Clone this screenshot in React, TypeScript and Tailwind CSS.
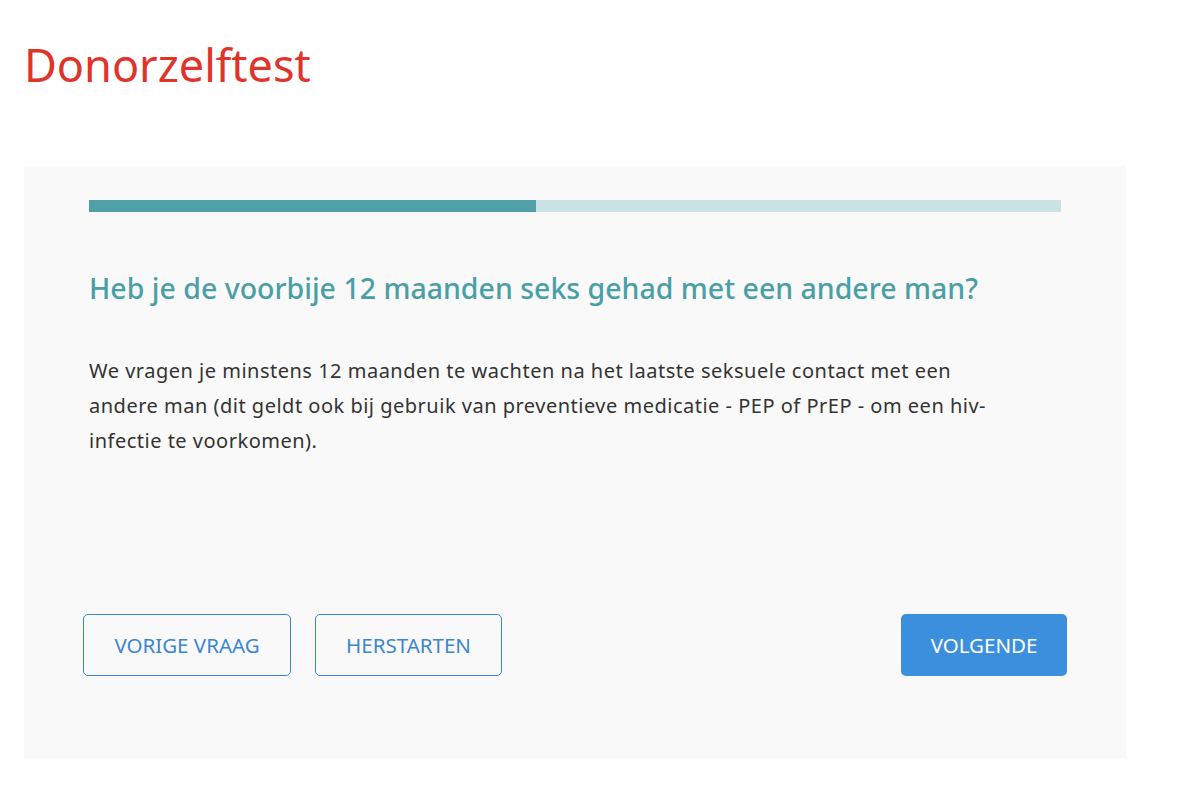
export default function App() {
  const progress = 46;

  return (
    <div className="min-h-screen bg-white" style={{ fontFamily: '"Noto Sans", "Open Sans", sans-serif' }}>
      <header className="px-6 pt-[37px] pb-[73px]">
        <h1 className="text-[45px] leading-[56px] text-[#e0332a] font-normal">Donorzelftest</h1>
      </header>

      <main className="ml-6 w-[1102px] bg-[#f9f9f9] px-[65px] pt-[34px] pb-[82px]">
        <div className="h-3 w-full bg-[#c9e3e5]">
          <div className="h-3 bg-[#4fa0a8]" style={{ width: `${progress}%` }} />
        </div>

        <h2 className="mt-[56px] text-[28.5px] leading-[40px] font-medium text-[#4a9fa7]">
          Heb je de voorbije 12 maanden seks gehad met een andere man?
        </h2>

        <p className="mt-[45px] text-[20px] leading-[35px] tracking-[0.5px] text-[#333333]">
          We vragen je minstens 12 maanden te wachten na het laatste seksuele contact met een
          <br />
          andere man (dit geldt ook bij gebruik van preventieve medicatie - PEP of PrEP - om een hiv-
          <br />
          infectie te voorkomen).
        </p>

        <div className="-mx-[6px] mt-[156px] flex items-center">
          <button className="h-[62px] w-[208px] rounded-[5px] border border-[#3b86d0] text-[20.5px] text-[#3b86d0]">
            VORIGE VRAAG
          </button>
          <button className="ml-6 h-[62px] w-[187px] rounded-[5px] border border-[#3b86d0] text-[20.5px] text-[#3b86d0]">
            HERSTARTEN
          </button>
          <button className="ml-auto h-[62px] w-[166px] rounded-[5px] bg-[#3b8fdc] text-[20.5px] text-white">
            VOLGENDE
          </button>
        </div>
      </main>
    </div>
  );
}
